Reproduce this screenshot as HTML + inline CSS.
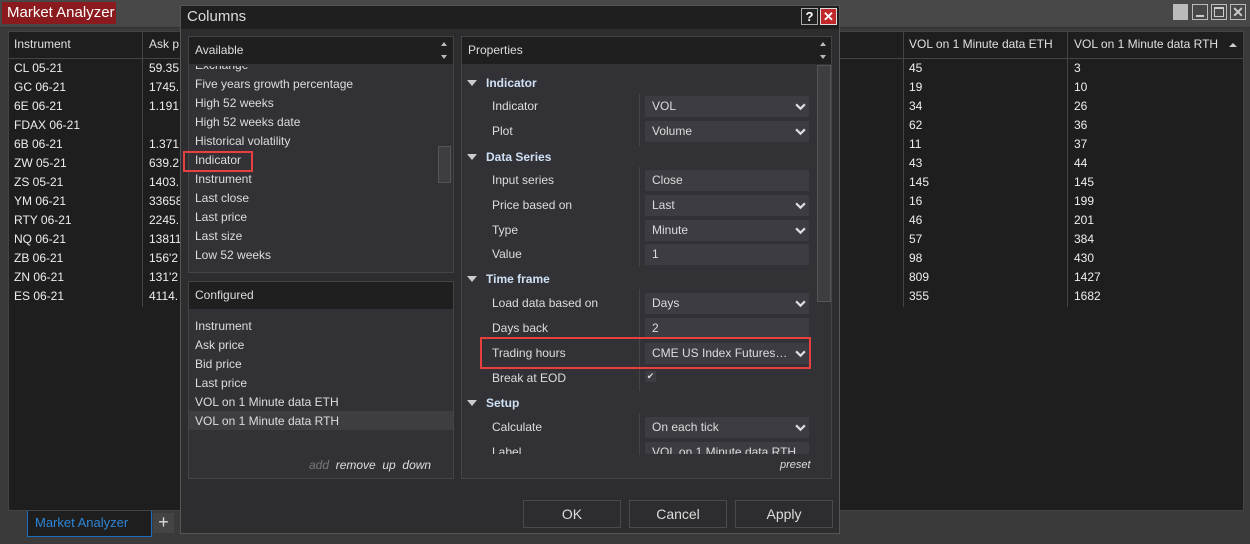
<!DOCTYPE html><html><head><style>
*{margin:0;padding:0;box-sizing:border-box}
body{width:1250px;height:544px;background:#3a3a3a;font-family:"Liberation Sans",sans-serif;font-size:12px;color:#e0e0e0;position:relative;overflow:hidden}
.a{position:absolute;white-space:nowrap}
.t{position:absolute;white-space:nowrap;line-height:19px}
.v{position:absolute;left:645px;width:164px;height:21px;background:#3c3c42;color:#ddd;padding-left:7px;line-height:21px}
.chev{position:absolute;right:3px;top:5px;width:11px;height:11px}
.sec{position:absolute;left:486px;font-weight:bold;color:#cfe0f5}
.tri{position:absolute;left:467px;width:0;height:0;border-left:5px solid transparent;border-right:5px solid transparent;border-top:6px solid #ccc}
.lab{position:absolute;left:492px;color:#ddd}
</style></head><body>
<div class="a" style="left:0;top:0;width:1250px;height:28px;background:#484848;border-bottom:1px solid #333"></div>
<div class="a" style="left:2px;top:2px;width:114px;height:22px;background:#8a1a1e;color:#fff;font-size:15px;line-height:22px;padding-left:5px">Market Analyzer</div>
<div class="a" style="left:1173px;top:4px;width:15px;height:16px;background:#bbb"></div>
<div class="a" style="left:1192px;top:4px;width:16px;height:16px;border:1px solid #bbb"><div class="a" style="left:3px;top:10px;width:8px;height:2px;background:#ccc"></div></div>
<div class="a" style="left:1211px;top:4px;width:16px;height:16px;border:1px solid #bbb"><div class="a" style="left:2px;top:2px;width:10px;height:10px;border:1px solid #ccc;border-top-width:2px"></div></div>
<div class="a" style="left:1230px;top:4px;width:16px;height:16px;border:1px solid #bbb;color:#ccc;font-size:14px;line-height:14px;text-align:center;font-weight:bold">✕</div>
<div class="a" style="left:8px;top:31px;width:1236px;height:480px;background:#1e1e1e;border:1px solid #444"></div>
<div class="a" style="left:8px;top:31px;width:1236px;height:28px;border-bottom:1px solid #444"></div>
<div class="a" style="left:142px;top:31px;width:1px;height:276px;background:#444"></div>
<div class="a" style="left:903px;top:31px;width:1px;height:276px;background:#444"></div>
<div class="a" style="left:1067px;top:31px;width:1px;height:276px;background:#444"></div>
<div class="t" style="left:14px;top:35px">Instrument</div>
<div class="t" style="left:149px;top:35px">Ask p</div>
<div class="t" style="left:909px;top:35px">VOL on 1 Minute data ETH</div>
<div class="t" style="left:1074px;top:35px">VOL on 1 Minute data RTH</div>
<div class="a" style="left:1229px;top:43px;border-left:4px solid transparent;border-right:4px solid transparent;border-bottom:4px solid #ccc"></div>
<div class="a" style="left:14px;top:59px;line-height:19px;color:#eee">CL 05-21<br>GC 06-21<br>6E 06-21<br>FDAX 06-21<br>6B 06-21<br>ZW 05-21<br>ZS 05-21<br>YM 06-21<br>RTY 06-21<br>NQ 06-21<br>ZB 06-21<br>ZN 06-21<br>ES 06-21</div>
<div class="a" style="left:149px;top:59px;line-height:19px;color:#eee">59.35<br>1745.<br>1.191<br>&nbsp;<br>1.371<br>639.2<br>1403.<br>33658<br>2245.<br>13811<br>156'2<br>131'2<br>4114.</div>
<div class="a" style="left:909px;top:59px;line-height:19px;color:#eee">45<br>19<br>34<br>62<br>11<br>43<br>145<br>16<br>46<br>57<br>98<br>809<br>355</div>
<div class="a" style="left:1074px;top:59px;line-height:19px;color:#eee">3<br>10<br>26<br>36<br>37<br>44<br>145<br>199<br>201<br>384<br>430<br>1427<br>1682</div>
<div class="a" style="left:27px;top:511px;width:125px;height:26px;background:#1e1e1e;border:1px solid #1a6fc0;border-top:none;color:#2d86d8;font-size:13px;line-height:24px;padding-left:7px">Market Analyzer</div>
<div class="a" style="left:153px;top:513px;width:21px;height:20px;background:#444;color:#ddd;font-size:18px;line-height:19px;text-align:center">+</div>
<div class="a" style="left:180px;top:5px;width:660px;height:529px;background:#2d2d30;border:1px solid #555"></div>
<div class="a" style="left:181px;top:6px;width:658px;height:23px;background:#1f1f1f;color:#ddd;font-size:15px;line-height:22px;padding-left:6px">Columns</div>
<div class="a" style="left:801px;top:8px;width:17px;height:17px;background:#222;border:1px solid #aaa;color:#fff;font-weight:bold;font-size:13px;text-align:center;line-height:15px">?</div>
<div class="a" style="left:820px;top:8px;width:17px;height:17px;background:#c0282c;border:1px solid #ddd;color:#fff;font-weight:bold;font-size:13px;text-align:center;line-height:15px">✕</div>
<div class="a" style="left:188px;top:36px;width:266px;height:237px;background:#323236;border:1px solid #444"></div>
<div class="a" style="left:189px;top:37px;width:264px;height:27px;background:#1f1f1f;color:#ddd;line-height:27px;padding-left:6px">Available</div>
<div class="a" style="left:441px;top:42px;border-left:3px solid transparent;border-right:3px solid transparent;border-bottom:4px solid #bbb"></div>
<div class="a" style="left:441px;top:55px;border-left:3px solid transparent;border-right:3px solid transparent;border-top:4px solid #bbb"></div>
<div class="a" style="left:438px;top:146px;width:13px;height:37px;background:#3e3e42;border:1px solid #555"></div>
<div class="a" style="left:189px;top:66px;width:248px;height:200px;overflow:hidden">
<div class="a" style="left:6px;top:-10px;line-height:19px;color:#ddd">Exchange<br>Five years growth percentage<br>High 52 weeks<br>High 52 weeks date<br>Historical volatility<br>Indicator<br>Instrument<br>Last close<br>Last price<br>Last size<br>Low 52 weeks</div></div>
<div class="a" style="left:183px;top:151px;width:70px;height:21px;border:2px solid #e8403f"></div>
<div class="a" style="left:188px;top:281px;width:266px;height:198px;background:#323236;border:1px solid #444"></div>
<div class="a" style="left:189px;top:282px;width:264px;height:27px;background:#1f1f1f;color:#ddd;line-height:27px;padding-left:6px">Configured</div>
<div class="a" style="left:189px;top:411px;width:264px;height:19px;background:#3e3e42"></div>
<div class="a" style="left:195px;top:317px;line-height:19px;color:#ddd">Instrument<br>Ask price<br>Bid price<br>Last price<br>VOL on 1 Minute data ETH<br>VOL on 1 Minute data RTH</div>
<div class="a" style="left:309px;top:458px;font-style:italic;color:#ddd"><span style="color:#777">add</span>&nbsp; remove&nbsp; up&nbsp; down</div>
<div class="a" style="left:461px;top:36px;width:371px;height:443px;background:#323236;border:1px solid #444"></div>
<div class="a" style="left:462px;top:37px;width:369px;height:27px;background:#1f1f1f;color:#ddd;line-height:27px;padding-left:6px">Properties</div>
<div class="a" style="left:820px;top:42px;border-left:3px solid transparent;border-right:3px solid transparent;border-bottom:4px solid #bbb"></div>
<div class="a" style="left:820px;top:55px;border-left:3px solid transparent;border-right:3px solid transparent;border-top:4px solid #bbb"></div>
<div class="a" style="left:817px;top:65px;width:14px;height:237px;background:#3e3e42;border:1px solid #555"></div>
<div class="tri" style="top:80px"></div><div class="sec" style="top:76px">Indicator</div>
<div class="a" style="left:639px;top:94px;width:1px;height:52px;background:#444"></div>
<div class="lab" style="top:99px">Indicator</div><div class="v" style="top:96px">VOL<svg class="chev" viewBox="0 0 10 10"><path d="M1 3l4 4 4-4" stroke="#ddd" stroke-width="2" fill="none"/></svg></div>
<div class="lab" style="top:124px">Plot</div><div class="v" style="top:121px">Volume<svg class="chev" viewBox="0 0 10 10"><path d="M1 3l4 4 4-4" stroke="#ddd" stroke-width="2" fill="none"/></svg></div>
<div class="tri" style="top:154px"></div><div class="sec" style="top:150px">Data Series</div>
<div class="a" style="left:639px;top:167px;width:1px;height:100px;background:#444"></div>
<div class="lab" style="top:173px">Input series</div><div class="v" style="top:170px">Close</div>
<div class="lab" style="top:198px">Price based on</div><div class="v" style="top:195px">Last<svg class="chev" viewBox="0 0 10 10"><path d="M1 3l4 4 4-4" stroke="#ddd" stroke-width="2" fill="none"/></svg></div>
<div class="lab" style="top:223px">Type</div><div class="v" style="top:220px">Minute<svg class="chev" viewBox="0 0 10 10"><path d="M1 3l4 4 4-4" stroke="#ddd" stroke-width="2" fill="none"/></svg></div>
<div class="lab" style="top:247px">Value</div><div class="v" style="top:244px">1</div>
<div class="tri" style="top:276px"></div><div class="sec" style="top:272px">Time frame</div>
<div class="a" style="left:639px;top:289px;width:1px;height:102px;background:#444"></div>
<div class="lab" style="top:296px">Load data based on</div><div class="v" style="top:293px">Days<svg class="chev" viewBox="0 0 10 10"><path d="M1 3l4 4 4-4" stroke="#ddd" stroke-width="2" fill="none"/></svg></div>
<div class="lab" style="top:321px">Days back</div><div class="v" style="top:318px">2</div>
<div class="lab" style="top:346px">Trading hours</div><div class="v" style="top:343px">CME US Index Futures…<svg class="chev" viewBox="0 0 10 10"><path d="M1 3l4 4 4-4" stroke="#ddd" stroke-width="2" fill="none"/></svg></div>
<div class="a" style="left:480px;top:337px;width:331px;height:32px;border:2px solid #e8403f"></div>
<div class="lab" style="top:371px">Break at EOD</div><div class="a" style="left:645px;top:371px;width:11px;height:11px;background:#3c3c42;color:#ddd;font-size:9px;line-height:11px;text-align:center">✔</div>
<div class="tri" style="top:400px"></div><div class="sec" style="top:396px">Setup</div>
<div class="a" style="left:639px;top:413px;width:1px;height:42px;background:#444"></div>
<div class="lab" style="top:420px">Calculate</div><div class="v" style="top:417px">On each tick<svg class="chev" viewBox="0 0 10 10"><path d="M1 3l4 4 4-4" stroke="#ddd" stroke-width="2" fill="none"/></svg></div>
<div class="a" style="left:462px;top:442px;width:354px;height:12px;overflow:hidden"><div class="a" style="left:30px;top:3px;color:#ddd">Label</div><div class="a" style="left:183px;top:0;width:164px;height:21px;background:#3c3c42;color:#ddd;padding-left:7px;line-height:21px">VOL on 1 Minute data RTH</div></div>
<div class="a" style="left:780px;top:459px;font-style:italic;font-size:11px;color:#ddd">preset</div>
<div class="a" style="left:523px;top:500px;width:98px;height:28px;background:#2d2d30;border:1px solid #4a4a4a;text-align:center;line-height:26px;font-size:14px;color:#ddd">OK</div>
<div class="a" style="left:629px;top:500px;width:98px;height:28px;background:#2d2d30;border:1px solid #4a4a4a;text-align:center;line-height:26px;font-size:14px;color:#ddd">Cancel</div>
<div class="a" style="left:735px;top:500px;width:98px;height:28px;background:#2d2d30;border:1px solid #4a4a4a;text-align:center;line-height:26px;font-size:14px;color:#ddd">Apply</div>
</body></html>
